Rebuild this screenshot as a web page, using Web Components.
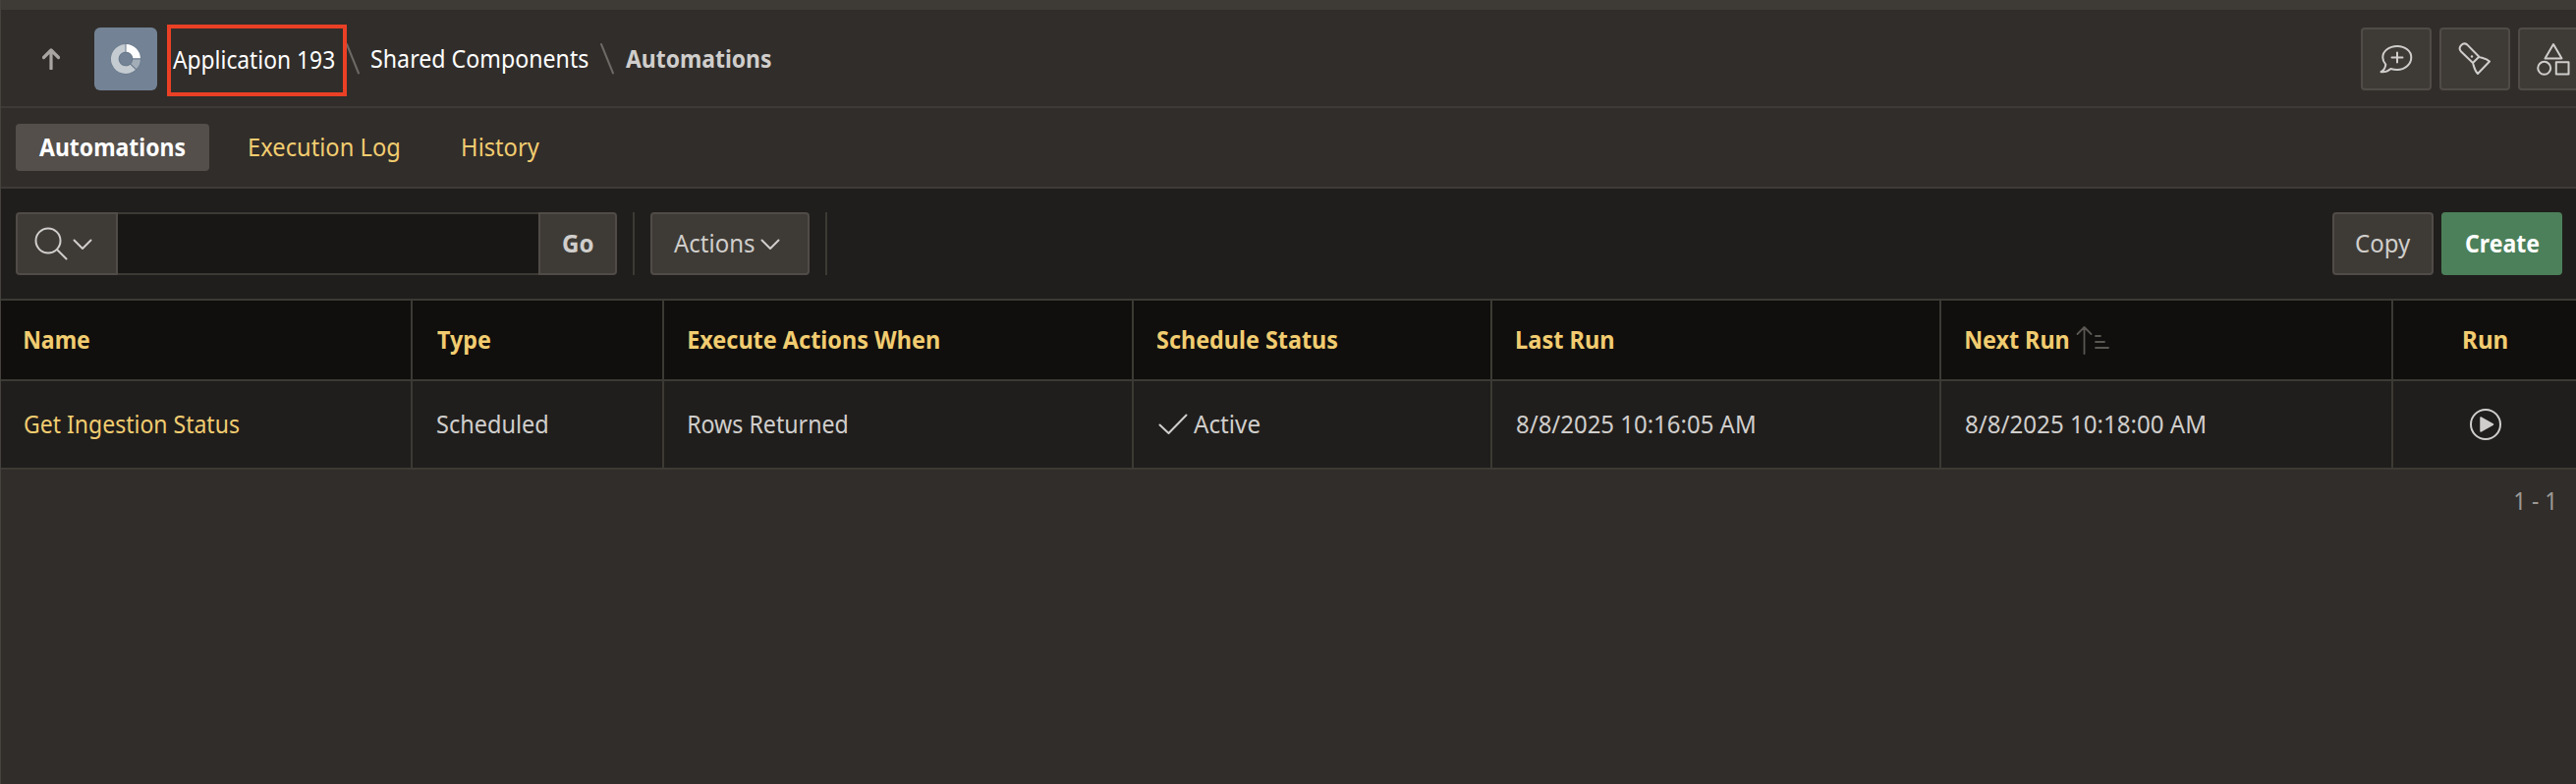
<!DOCTYPE html>
<html lang="en">
<head>
<meta charset="utf-8">
<title>Automations</title>
<style>
html,body{margin:0;height:100%;background:#312d2a}
body{font-family:"Noto Sans","Open Sans",sans-serif;font-size:25px;color:#d0cecc;overflow:hidden}
</style>
</head>
<body>
<builder-page>
  <builder-header slot="header"></builder-header>
  <builder-tabs slot="tabs">
    <builder-tab active><fit-text w="148.5" weight="700">Automations</fit-text></builder-tab>
    <builder-tab><fit-text w="152.5">Execution Log</fit-text></builder-tab>
    <builder-tab><fit-text w="78">History</fit-text></builder-tab>
  </builder-tabs>
  <report-toolbar slot="toolbar"></report-toolbar>
  <report-table slot="table"></report-table>
  <fit-text slot="pager" w="38.5">1 - 1</fit-text>
</builder-page>

<script>
const define = (name, html, setup) => {
  const t = document.createElement('template');
  t.innerHTML = html;
  customElements.define(name, class extends HTMLElement {
    connectedCallback() {
      if (this.shadowRoot) return;
      this.attachShadow({mode: 'open'}).append(t.content.cloneNode(true));
      if (setup) setup(this, this.shadowRoot);
    }
  });
};

/* Condenses its label so the inked width equals the w attribute. */
const ctx = document.createElement('canvas').getContext('2d');
define('fit-text', `<style>
:host{display:inline-block;flex:none;line-height:34px;height:34px;white-space:pre}
span{display:block;width:max-content;transform-origin:0 0}
</style><span><slot></slot></span>`, (host, root) => {
  const w = +host.getAttribute('w'), weight = host.getAttribute('weight') || '400';
  ctx.font = weight + ' 25px "Noto Sans","Open Sans",sans-serif';
  const m = ctx.measureText(host.textContent);
  const s = w / (m.actualBoundingBoxLeft + m.actualBoundingBoxRight);
  host.style.width = w + 'px';
  const span = root.querySelector('span');
  span.style.fontWeight = weight;
  span.style.transform = `translate(${m.actualBoundingBoxLeft * s}px,-1px) scaleX(${s})`;
});

const icons = {
  up: [18, 22, '<path d="M9 21V2M1.500 9.500L9 2l7.500 7.500" stroke-width="3.200"/>'],
  donut: [32, 32, '<g stroke="none"><circle cx="16" cy="16" r="15.500" fill="#68788a"/><path fill="#fff" d="M16.500 1A15 15 0 0 1 31 15.300H23.300A7.200 7.200 0 0 0 16.500 8.700Z"/><path fill="#a2adb8" d="M31 16.500A15 15 0 0 1 26.800 26.300L21.300 20.900A7.200 7.200 0 0 0 23.300 16.500Z"/><path fill="#c4cbd1" d="M15.500 1V8.700A7.300 7.300 0 1 0 20.500 21.700L26 27.100A15 15 0 1 1 15.500 1Z"/><circle cx="16" cy="16" r="6.500" fill="#738395"/></g>'],
  comment: [34, 30, '<path d="M18 2C26 2 32.300 7 32.300 13.500S26 26 18 26C15.700 26 13.500 25.600 11.500 25C8.500 27.700 5 28.500 1.500 28.200C4.500 26.500 6 24 6.300 20.700C4.500 18.500 3.300 16.200 3.300 13.500C3.300 7 9.800 2 18 2ZM18 8.500V18.500M12.500 13.500H23.500"/>'],
  torch: [34, 34, '<path d="M15 21L2.800 9.200A4.700 4.700 0 0 1 9.400 2.600L21.300 14.800ZM21.300 14.800C24 16 28.500 16.300 32 19.500L20 32C16.500 28.500 16 24 15 21"/><circle cx="14" cy="14.500" r="1.200" stroke="none" fill="#d0cecc"/>'],
  shapes: [34, 34, '<path d="M17 2L25.500 16.500H8.500ZM19.800 20.200H32.500V32.500H19.800Z"/><circle cx="7.700" cy="26.300" r="6.500"/>'],
  search: [34, 34, '<circle cx="14" cy="14" r="12.500"/><path d="M23 23l9.500 9.500"/>'],
  chevron: [20, 12, '<path d="M1.500 1.500L10 10l8.500-8.500"/>'],
  check: [30, 22, '<path d="M1.500 11.500L10.500 20L28.500 1.500"/>'],
  sort: [34, 30, '<path d="M8.500 29V2M1.500 9L8.500 2l7 7M20 11h5M20 17h9M20 23h13" stroke="#5a5753" stroke-width="1.800"/>'],
  play: [34, 34, '<circle cx="17" cy="17" r="15"/><path d="M12 10L24.500 17L12 24Z" fill="#d0cecc" stroke-width="1.500"/>'],
  slash: [16, 34, '<path d="M2 2L14 31.500" stroke="#6d6965" stroke-width="2"/>']
};
define('apex-icon', `<style>:host{display:block;flex:none;color:#d0cecc}svg{display:block}</style>`, (host, root) => {
  const [w, h, body] = icons[host.getAttribute('name')];
  root.innerHTML += `<svg width="${w}" height="${h}" viewBox="0 0 ${w} ${h}" fill="none" stroke="currentColor" stroke-width="2" stroke-linecap="round" stroke-linejoin="round">${body}</svg>`;
});

define('apex-button', `<style>
:host{display:flex;box-sizing:border-box;align-items:center;justify-content:center;flex:none;height:64px;border:2px solid #504b47;border-radius:4px;background:#3e3b36;color:#d0cecc}
:host([primary]){background:#4c805a;border-color:#4c805a;color:#fff}
</style><slot></slot>`);

define('builder-page', `<style>
:host{display:flex;flex-direction:column;box-sizing:border-box;height:100vh;border-left:1px solid #45423e;background:#312d2a}
.strip{height:10px;flex:none;background:#3e3b36}
.pager{display:flex;justify-content:flex-end;padding:15px 24px 0 0;color:#9c9995}
</style><div class="strip"></div><slot name="header"></slot><slot name="tabs"></slot><slot name="toolbar"></slot><slot name="table"></slot><div class="pager"><slot name="pager"></slot></div>`);

define('builder-header', `<style>
:host{display:flex;box-sizing:border-box;height:100px;border-bottom:2px solid #3e3a37;align-items:center;padding-left:42px;padding-top:1px;color:#fff}
.up{opacity:.75;margin-right:35px}
.app{display:grid;place-items:center;width:64px;height:64px;border-radius:6px;background:#738395}
.mark{box-sizing:border-box;width:183px;height:73px;border:4px solid #ea4025;margin:3px 0 0 10px;padding:15px 0 0 2px;position:relative;z-index:1}
.s1{margin-left:-2px}.s2{margin-left:11px}
.c{color:#d0cecc;margin-left:11px}
.tools{display:flex;gap:8px;margin-left:auto;margin-right:-13px}
.tools apex-button{width:72px}
</style>
<apex-icon class="up" name="up"></apex-icon>
<div class="app"><apex-icon name="donut"></apex-icon></div>
<div class="mark"><fit-text w="164">Application 193</fit-text></div>
<apex-icon class="s1" name="slash"></apex-icon>
<fit-text style="margin-left:11px" w="220.5">Shared Components</fit-text>
<apex-icon class="s2" name="slash"></apex-icon>
<fit-text class="c" w="148" weight="700">Automations</fit-text>
<div class="tools"><apex-button><apex-icon name="comment"></apex-icon></apex-button><apex-button><apex-icon name="torch"></apex-icon></apex-button><apex-button><apex-icon name="shapes"></apex-icon></apex-button></div>`);

define('builder-tabs', `<style>
:host{display:flex;box-sizing:border-box;height:82px;border-bottom:2px solid #3e3a37;align-items:center;padding-left:15px;gap:17px}
</style><slot></slot>`);
define('builder-tab', `<style>
:host{display:flex;box-sizing:border-box;height:48px;align-items:center;padding:0 24px;border-radius:4px;color:#f1cc70}
:host([active]){background:#544f4b;color:#fff}
</style><slot></slot>`);

define('report-toolbar', `<style>
:host{display:flex;box-sizing:border-box;height:114px;border-bottom:2px solid #3c3a34;align-items:center;padding:0 14px 0 15px;background:#201e1c}
.find{width:104px;border-radius:4px 0 0 4px;justify-content:flex-start;padding-left:17px;gap:5px}
.find apex-icon:last-child{margin-top:1px}
input{box-sizing:border-box;width:428px;height:64px;margin:0;padding:0 16px;border:2px solid #3c3a34;border-width:2px 0;background:#191715;color:#d0cecc;font:inherit;outline:0;border-radius:0}
.go{width:80px;border-radius:0 4px 4px 0}
i{width:2px;height:64px;background:#3c3a34;margin:0 16px}
.act{width:162px;gap:6px;justify-content:flex-start;padding-left:22px}
.act apex-icon{margin-top:2px}
.copy{width:103px;margin-left:auto;margin-right:8px;padding-left:1px}
.create{width:123px}
</style>
<apex-button class="find"><apex-icon name="search"></apex-icon><apex-icon name="chevron"></apex-icon></apex-button><input aria-label="Search"><apex-button class="go"><fit-text w="31" weight="700">Go</fit-text></apex-button>
<i></i><apex-button class="act"><fit-text w="81.5">Actions</fit-text><apex-icon name="chevron"></apex-icon></apex-button><i></i>
<apex-button class="copy"><fit-text w="55.5">Copy</fit-text></apex-button><apex-button class="create" primary><fit-text w="74" weight="700">Create</fit-text></apex-button>`);

define('report-table', `<style>
:host{display:grid;grid-template-columns:419px 256px 478px 365px 457px 460px 1fr;grid-template-rows:82px 90px}
report-cell:nth-of-type(7n){border-right:0;justify-content:center;padding:0 0 0 2px}
report-cell:nth-of-type(7n+1),report-cell:nth-of-type(7n+4){padding-left:24px}
</style>
<report-cell head><fit-text w="66" weight="700">Name</fit-text></report-cell>
<report-cell head><fit-text w="54" weight="700">Type</fit-text></report-cell>
<report-cell head><fit-text w="255" weight="700">Execute Actions When</fit-text></report-cell>
<report-cell head><fit-text w="183.500" weight="700">Schedule Status</fit-text></report-cell>
<report-cell head><fit-text w="98.500" weight="700">Last Run</fit-text></report-cell>
<report-cell head><fit-text w="104.500" weight="700">Next Run</fit-text><apex-icon name="sort" style="margin:0 0 0 8px"></apex-icon></report-cell>
<report-cell head><fit-text w="44" weight="700">Run</fit-text></report-cell>
<report-cell link><fit-text w="218">Get Ingestion Status</fit-text></report-cell>
<report-cell><fit-text w="112.500">Scheduled</fit-text></report-cell>
<report-cell><fit-text w="161.500">Rows Returned</fit-text></report-cell>
<report-cell><apex-icon name="check" style="margin:0 6px 0 1px"></apex-icon><fit-text w="67">Active</fit-text></report-cell>
<report-cell><fit-text w="242">8/8/2025 10:16:05 AM</fit-text></report-cell>
<report-cell><fit-text w="243.500">8/8/2025 10:18:00 AM</fit-text></report-cell>
<report-cell><apex-icon name="play"></apex-icon></report-cell>`);
define('report-cell', `<style>
:host{display:flex;box-sizing:border-box;align-items:center;padding-left:24.500px;border-right:2px solid #3c3a34;border-bottom:2px solid #3c3a34;background:#201e1c;color:#d0cecc}
:host([head]){background:#100f0d;color:#f1cc70}
:host([link]){color:#f1cc70}
</style><slot></slot>`);
</script>
</body>
</html>
